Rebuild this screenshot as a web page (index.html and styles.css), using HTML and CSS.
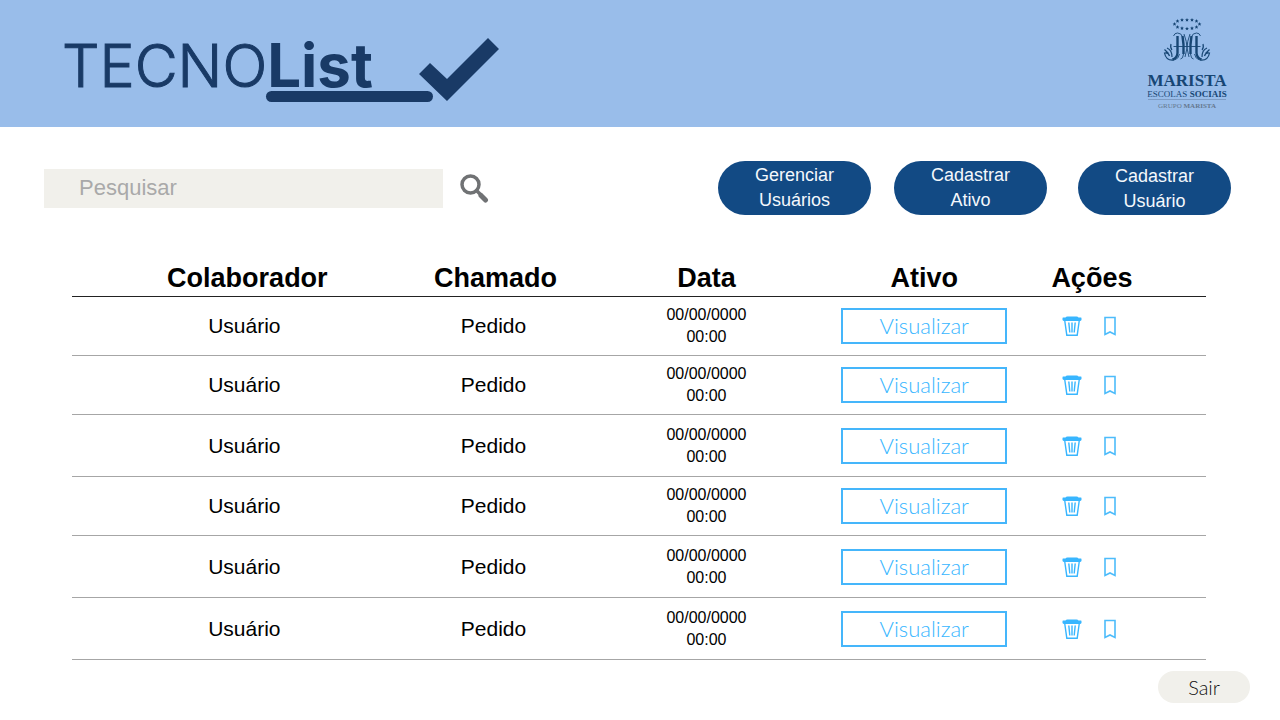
FILE: index.html
```html
<!DOCTYPE html>
<html lang="pt-BR">
<head>
<meta charset="utf-8">
<title>TecnoList</title>
<link rel="stylesheet" href="styles.css">
</head>
<body>
<header class="topbar">
  <h1 class="brand">
    <span class="brand-name">TECNO<strong>List</strong></span>
    <svg class="brand-mark" viewBox="0 0 236 64" aria-hidden="true">
      <rect x="3" y="53" width="167" height="11" rx="5.5"/>
      <path d="M156 36 167 25 184 41 225 0 236 11 184 63Z"/>
    </svg>
  </h1>
  <div class="partner">
    <svg class="emblem" viewBox="0 0 52 48" aria-hidden="true">
      <defs>
        <path id="star" d="M0-1.900.600-.600 1.900-.500.900.400 1.200 1.700 0 1-1.200 1.700-.900.400-1.900-.500-.600-.600Z"/>
        <g id="half">
          <path class="emblem-thick" d="M16.500 18v17q-.5 5-5 6.500M21.500 18q1.500 8 1 18"/>
          <path class="emblem-thin" d="M12.500 18q1-3 4-3 4 0 5 4M18.500 36q-1 5-5 6M22.500 36q-.5 5-3 5M23 16q3 8 3 14l-2 9M12.500 28.500H26"/>
          <path class="emblem-leaf" d="M13 42q-8 1-9.500-7 4-1 5 3M6 30q5 2 5 9M10 26q-1 4 1 6M3.500 31.500l4 4"/>
        </g>
      </defs>
      <g>
        <use href="#star" x="13.500" y="6"/><use href="#star" x="16.500" y="3"/><use href="#star" x="21" y="1.900"/><use href="#star" x="26" y="1.900"/><use href="#star" x="31" y="1.900"/><use href="#star" x="35.500" y="3"/><use href="#star" x="38.500" y="6"/><use href="#star" x="35.500" y="9"/><use href="#star" x="31" y="10.200"/><use href="#star" x="26" y="10.600"/><use href="#star" x="21" y="10.200"/><use href="#star" x="16.500" y="9"/>
      </g>
      <use href="#half"/>
      <use href="#half" transform="translate(52 0) scale(-1 1)"/>
    </svg>
    <span class="partner-name">MARISTA</span>
    <span class="partner-unit">ESCOLAS <b>SOCIAIS</b></span>
    <span class="partner-group">GRUPO <b>MARISTA</b></span>
  </div>
</header>
<main class="page">
  <div class="toolbar">
    <form class="search" role="search">
      <input class="search-input" type="search" placeholder="Pesquisar" aria-label="Pesquisar">
      <button class="icon-button" type="button" aria-label="Buscar">
        <svg class="search-icon" viewBox="0 0 30 30"><circle cx="11.500" cy="11.500" r="8.500"/><path class="neck" d="m17.500 17.500 4 4"/><path class="grip" d="m22 22.500 4.500 4.500"/></svg>
      </button>
    </form>
    <nav class="actions">
      <button class="pill" type="button">Gerenciar<br>Usuários</button>
      <button class="pill" type="button">Cadastrar<br>Ativo</button>
      <button class="pill pill-last" type="button">Cadastrar<br>Usuário</button>
    </nav>
  </div>
  <table class="tickets">
    <colgroup><col class="col-person"><col class="col-ticket"><col class="col-date"><col class="col-asset"><col class="col-actions"></colgroup>
    <thead>
      <tr><th scope="col">Colaborador</th><th scope="col">Chamado</th><th scope="col">Data</th><th scope="col">Ativo</th><th scope="col">Ações</th></tr>
    </thead>
    <tbody id="rows"></tbody>
  </table>
</main>
<footer class="footer"><button class="exit" type="button">Sair</button></footer>
<template id="row">
  <tr>
    <td>Usuário</td>
    <td class="ticket">Pedido</td>
    <td class="date">00/00/0000<br>00:00</td>
    <td><button class="view" type="button">Visualizar</button></td>
    <td class="row-actions">
      <div class="row-icons">
        <button class="icon-button" type="button" aria-label="Excluir">
          <svg class="trash" viewBox="0 0 20 20"><path class="lid" d="M3.500 1.500Q4 .500 5.500.500h9q1.500 0 2 1H19q.5 0 .5 1V4Q19 5 18 5H2Q1 5 .500 4V2.500q0-1 .5-1Z"/><path class="can" d="m2.800 5 2 14.200h10.400l2-14.200M6.800 6.500l1 10M10 6.500v10M13.200 6.500l-1 10"/></svg>
        </button>
        <button class="icon-button" type="button" aria-label="Marcar">
          <svg class="bookmark" viewBox="0 0 12 20"><path d="M1 1.500h10v17L6 16l-5 2.500Z"/></svg>
        </button>
      </div>
    </td>
  </tr>
</template>
<script src="app.js"></script>
</body>
</html>
```
FILE: styles.css
```css
* { box-sizing: border-box; }
body { margin: 0; background: #fff; color: #000; font-family: "Liberation Sans", Arial, sans-serif; }
button { font-family: inherit; cursor: pointer; }

.topbar { display: flex; justify-content: space-between; align-items: flex-start; min-height: 127px; padding: 18px 52px 16px 62px; background: #99bdea; }
.brand { position: relative; margin: 10px 0 0; color: #193a66; font: 300 59px/74px Inter, sans-serif; -webkit-text-stroke: 1px #193a66; }
.brand strong { font-size: 60px; font-weight: 700; -webkit-text-stroke: 0; }
.brand-mark { position: absolute; left: 201px; top: 10px; width: 236px; height: 64px; fill: #193a66; }
.partner { display: flex; flex-direction: column; align-items: center; width: 82px; color: #174674; font-family: "Liberation Serif", serif; white-space: nowrap; }
.emblem { width: 52px; height: 48px; fill: #174674; }
.emblem-thick, .emblem-thin, .emblem-leaf { fill: none; stroke: #174674; }
.emblem-thick { stroke-width: 2.4px; }
.emblem-thin { stroke-width: 0.9px; }
.emblem-leaf { stroke-width: 1.2px; }
.partner-name { margin-top: 6px; font-size: 17px; line-height: 18px; font-weight: 700; }
.partner-unit { font-size: 9px; line-height: 8px; }
.partner-group { width: 78px; margin-top: 1px; padding-top: 2px; border-top: 1px solid #7d9cc4; color: #65788f; font-size: 7px; line-height: 8px; text-align: center; }

.page { padding: 34px 49px 0 44px; }
.toolbar { display: flex; justify-content: space-between; align-items: center; }
.search { display: flex; align-items: center; gap: 16px; }
.search-input { width: 399px; height: 39px; padding: 0 35px; border: 0; border-radius: 0; background: #f1f0eb; font: 22px "Liberation Sans", Arial, sans-serif; }
.search-input::placeholder { color: #a9a9a9; opacity: 1; }
.icon-button { display: flex; padding: 0; border: 0; background: none; }
.search-icon { width: 30px; height: 30px; fill: none; stroke: #707274; stroke-linecap: round; }
.search-icon circle { stroke-width: 3.5px; }
.neck { stroke-width: 3.5px; }
.grip { stroke-width: 5px; }
.actions { display: flex; gap: 23px; }
.pill { width: 153px; height: 54px; padding: 0; border: 0; border-radius: 27px; background: #124a84; color: #f4f8fc; font-size: 18px; line-height: 25px; }
.pill-last { margin-left: 8px; padding-top: 2px; }

.tickets { width: calc(100% - 53px); margin: 47px 25px 0 28px; border-collapse: separate; border-spacing: 0; table-layout: fixed; }
.col-person { width: 30.4%; }
.col-ticket { width: 13.9%; }
.col-date { width: 23.3%; }
.col-asset { width: 15.1%; }
.tickets th { height: 35px; padding: 0 0 2px; border-bottom: 1px solid #222; font-size: 27px; line-height: 32px; white-space: nowrap; }
.tickets td { height: 59px; padding: 0; border-bottom: 1px solid #a6a6a6; font-size: 21px; text-align: center; }
.tickets .tall td { height: 62px; }
.tickets th:first-child { padding-left: 6px; }
.tickets .ticket { padding-right: 4px; }
.tickets th:last-child { padding-right: 32px; }
.tickets .row-actions { padding-right: 38px; }
.tickets .date { font-size: 16px; line-height: 22px; }
.view { width: 166px; height: 36px; padding: 0; border: 2px solid #45b6fb; background: none; color: #38b6ff; font: 300 22px/30px Lato, sans-serif; }
.row-icons { display: flex; justify-content: center; align-items: center; gap: 22px; }
.trash { width: 20px; height: 20px; }
.lid { fill: #38b6ff; }
.can { fill: none; stroke: #38b6ff; stroke-width: 1.4px; }
.bookmark { width: 12px; height: 20px; fill: none; stroke: #4dbcfb; stroke-width: 1.6px; }

.footer { display: flex; justify-content: flex-end; padding: 11px 30px 16px; }
.exit { width: 92px; height: 32px; padding: 0; border: 0; border-radius: 16px; background: #f1f0eb; color: #111; font: 300 20px Lato, sans-serif; }
```
FILE: app.js
```js
const body = document.getElementById("rows");
const template = document.getElementById("row");
for (const tall of [false, false, true, false, true, true]) {
  const row = template.content.cloneNode(true);
  row.querySelector("tr").classList.toggle("tall", tall);
  body.append(row);
}
```
